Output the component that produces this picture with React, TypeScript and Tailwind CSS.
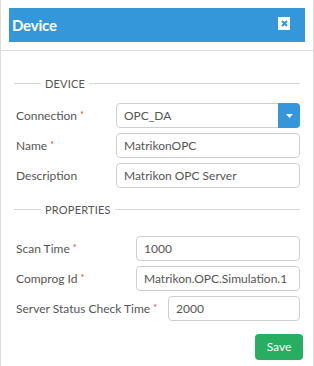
const font = { fontFamily: "Lato, 'Open Sans', sans-serif" };

function Req() {
  return <span className="ml-[3px] text-[9px] relative -top-[2px] text-[#e3342f]">*</span>;
}

function Legend({ text }: { text: string }) {
  return (
    <div className="flex items-center h-[13px]">
      <div className="w-[27px] h-px bg-[#d6d6d6]" />
      <span className="px-[3px] mx-[1px] text-[11px] leading-none text-[#555] tracking-[0.2px]">{text}</span>
      <div className="flex-1 h-px bg-[#d6d6d6]" />
    </div>
  );
}

function Input({ value }: { value: string }) {
  return (
    <div className="flex-1 h-[25px] border border-[#cfcfcf] rounded-[4px] px-[7px] flex items-center text-[12px] text-[#555] bg-white">
      {value}
    </div>
  );
}

export default function App() {
  return (
    <div className="w-[314px] h-[366px] bg-white border-x border-[#dcdcdc] text-[#555]" style={font}>
      <div className="pt-[8px] px-[8px] pb-[8px] border-b border-[#dcdcdc]">
        <div className="h-[34px] bg-[#3497d9] flex items-center justify-between pl-[3px] pr-[15px]">
          <span className="text-white font-bold text-[15px] tracking-[-0.2px]">Device</span>
          <div className="w-[12px] h-[13px] bg-white flex items-center justify-center -mt-[3px]">
            <svg width="7" height="7" viewBox="0 0 7 7">
              <path d="M1 1L6 6M6 1L1 6" stroke="#3497d9" strokeWidth="2" />
            </svg>
          </div>
        </div>
      </div>

      <div className="pt-[26px] pl-[13px] pr-[13px]">
        <Legend text="DEVICE" />
        <div className="mt-[13px] flex flex-col gap-[5px]">
          <div className="flex items-center">
            <div className="w-[102px] pl-[2px] text-[12px]">Connection<Req /></div>
            <div className="flex-1 h-[25px] border border-[#cfcfcf] rounded-[4px] flex items-stretch text-[12px] text-[#555]">
              <div className="flex-1 flex items-center pl-[7px]">OPC_DA</div>
              <div className="w-[22px] -my-px -mr-px bg-[#3497d9] rounded-r-[4px] flex items-center justify-center">
                <svg width="7" height="4" viewBox="0 0 7 4">
                  <path d="M0 0H7L3.5 4Z" fill="white" />
                </svg>
              </div>
            </div>
          </div>
          <div className="flex items-center">
            <div className="w-[102px] pl-[2px] text-[12px]">Name<Req /></div>
            <Input value="MatrikonOPC" />
          </div>
          <div className="flex items-center">
            <div className="w-[102px] pl-[2px] text-[12px]">Description</div>
            <Input value="Matrikon OPC Server" />
          </div>
        </div>

        <div className="mt-[15px]">
          <Legend text="PROPERTIES" />
        </div>
        <div className="mt-[20px] flex flex-col gap-[5px]">
          <div className="flex items-center">
            <div className="w-[122px] pl-[2px] text-[12px]">Scan Time<Req /></div>
            <Input value="1000" />
          </div>
          <div className="flex items-center">
            <div className="w-[122px] pl-[2px] text-[12px]">Comprog Id<Req /></div>
            <Input value="Matrikon.OPC.Simulation.1" />
          </div>
          <div className="flex items-center">
            <div className="w-[154px] pl-[2px] text-[12px] whitespace-nowrap">Server Status Check Time<Req /></div>
            <Input value="2000" />
          </div>
        </div>
        <div className="mt-[13px] flex justify-end -mr-[3px]">
          <button className="w-[48px] h-[26px] rounded-[4px] bg-[#27ae60] text-white text-[12px]">Save</button>
        </div>
      </div>
    </div>
  );
}
